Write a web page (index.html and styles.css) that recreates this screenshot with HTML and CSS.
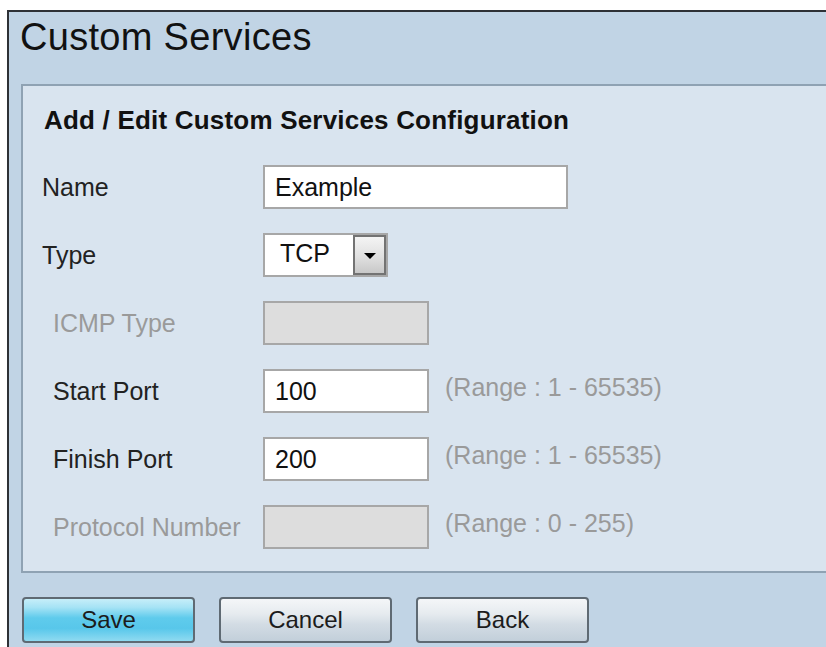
FILE: index.html
```html
<!DOCTYPE html>
<html lang="en">
<head>
<meta charset="utf-8">
<title>Custom Services</title>
<link rel="stylesheet" href="styles.css">
</head>
<body>
<div class="frame">
  <h1 class="page-title">Custom Services</h1>
  <section class="panel">
    <h2 class="panel-title">Add / Edit Custom Services Configuration</h2>
    <div class="form">
      <label class="lbl">Name</label>
      <div class="field"><input class="txt txt-wide" type="text" value="Example"></div>

      <label class="lbl">Type</label>
      <div class="field">
        <div class="select">
          <span class="select-value">TCP</span>
          <span class="select-btn"><span class="arrow"></span></span>
        </div>
      </div>

      <label class="lbl lbl-sub lbl-off">ICMP Type</label>
      <div class="field"><input class="txt txt-short" type="text" disabled></div>

      <label class="lbl lbl-sub">Start Port</label>
      <div class="field"><input class="txt txt-short" type="text" value="100"><span class="hint">(Range : 1 - 65535)</span></div>

      <label class="lbl lbl-sub">Finish Port</label>
      <div class="field"><input class="txt txt-short" type="text" value="200"><span class="hint">(Range : 1 - 65535)</span></div>

      <label class="lbl lbl-sub lbl-off">Protocol Number</label>
      <div class="field"><input class="txt txt-short" type="text" disabled><span class="hint">(Range : 0 - 255)</span></div>
    </div>
  </section>
  <div class="actions">
    <button class="btn btn-primary" type="button">Save</button>
    <button class="btn" type="button">Cancel</button>
    <button class="btn" type="button">Back</button>
  </div>
</div>
</body>
</html>
```

FILE: styles.css
```css
html, body {
  margin: 0;
  padding: 0;
  background: #ffffff;
}

body {
  font-family: "Liberation Sans", Arial, sans-serif;
  color: #1c1c1c;
}

.frame {
  margin: 10px 0 0 7px;
  height: 637px;
  box-sizing: border-box;
  border-top: 2px solid #2e3136;
  border-left: 2px solid #2e3136;
  background: #c1d4e5;
  overflow: hidden;
}

.page-title {
  margin: 0;
  padding: 3px 0 0 11px;
  font-size: 38px;
  line-height: 44px;
  font-weight: normal;
  letter-spacing: 0.3px;
  color: #111;
}

.panel {
  margin: 25px -30px 0 12px;
  border: 2px solid #8fa2b3;
  border-right: none;
  background: #d9e4ef;
  padding: 19px 0 22px 19px;
}

.panel-title {
  margin: 0 0 30px 2px;
  font-size: 26px;
  line-height: 30px;
  font-weight: bold;
  letter-spacing: 0.2px;
  color: #111;
}

.form {
  display: grid;
  grid-template-columns: 221px 1fr;
  grid-auto-rows: 44px;
  row-gap: 24px;
  align-items: center;
}

.lbl {
  font-size: 25px;
  color: #222;
}

.lbl-sub {
  padding-left: 11px;
}

.lbl-off {
  color: #9a9a9a;
}

.field {
  display: flex;
  align-items: center;
  height: 44px;
}

.txt {
  box-sizing: border-box;
  height: 44px;
  margin: 0;
  padding: 0 10px;
  border: 2px solid #a7a7a7;
  border-radius: 0;
  background: #ffffff;
  font-family: "Liberation Sans", Arial, sans-serif;
  font-size: 25px;
  color: #111;
  outline: none;
}

.txt-wide {
  width: 305px;
}

.txt-short {
  width: 166px;
}

.txt:disabled {
  background: #dddddd;
}

.hint {
  margin-left: 16px;
  margin-top: -8px;
  font-size: 25px;
  color: #9a9a9a;
}

.select {
  box-sizing: border-box;
  width: 125px;
  height: 44px;
  display: flex;
  align-items: stretch;
  border: 2px solid #a7a7a7;
  background: #ffffff;
}

.select-value {
  flex: 1;
  display: flex;
  align-items: center;
  padding-left: 15px;
  margin-top: -4px;
  font-size: 25px;
  color: #111;
}

.select-btn {
  box-sizing: border-box;
  width: 33px;
  display: flex;
  align-items: center;
  justify-content: center;
  border: 2px solid #737373;
  background: linear-gradient(#f4f4f4, #e0e0e0 55%, #c8c8c8);
}

.arrow {
  width: 0;
  height: 0;
  border-left: 6px solid transparent;
  border-right: 6px solid transparent;
  border-top: 6px solid #000;
  margin-top: 2px;
}

.actions {
  display: flex;
  gap: 24px;
  margin: 24px 0 0 13px;
}

.btn {
  box-sizing: border-box;
  width: 173px;
  height: 46px;
  margin: 0;
  padding: 0;
  border: 2px solid #5f6a73;
  border-radius: 4px;
  background: linear-gradient(#f4f6f8 0%, #e6ebef 35%, #d3dce4 60%, #c2cfda 100%);
  font-family: "Liberation Sans", Arial, sans-serif;
  font-size: 24px;
  color: #1c1c1c;
}

.btn-primary {
  background: linear-gradient(#c6eef9 0%, #a6e3f5 20%, #5fcbec 45%, #58c7ea 70%, #8fdaf1 100%);
}
```
